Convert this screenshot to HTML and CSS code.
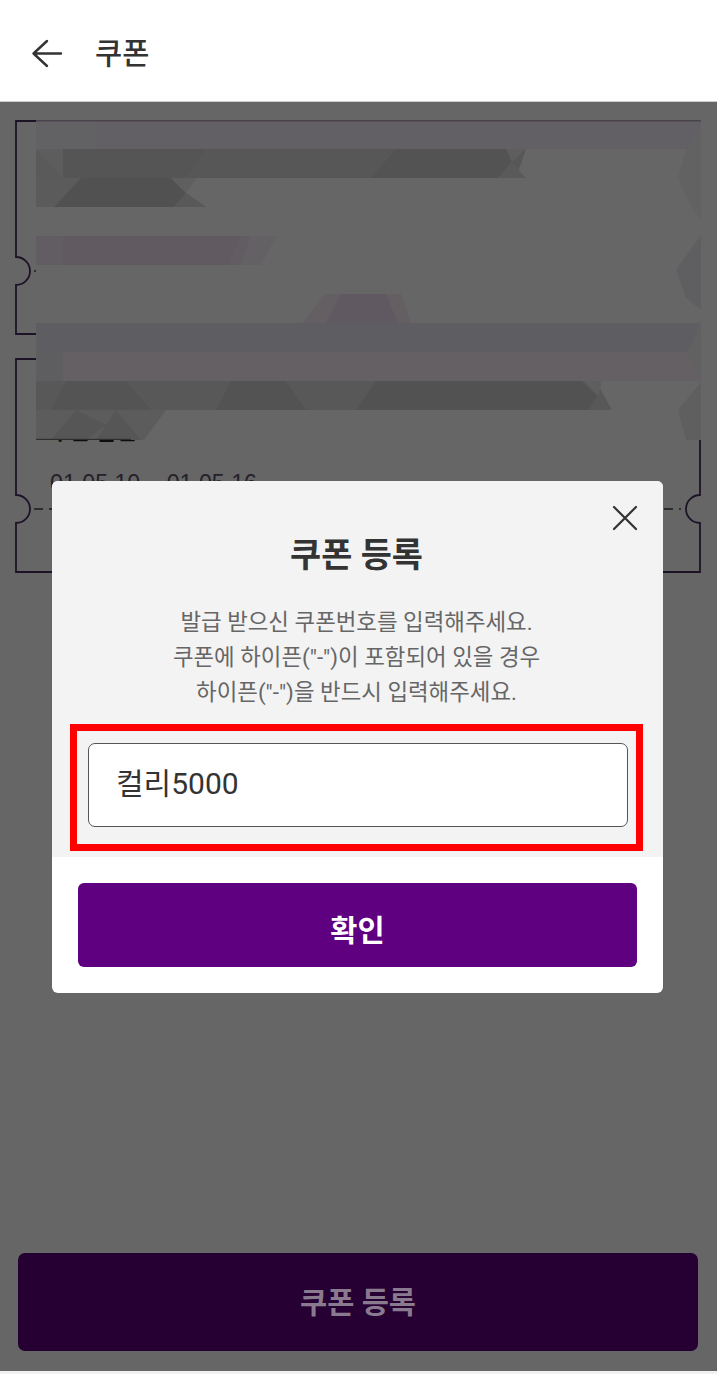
FILE: index.html
```html
<!DOCTYPE html>
<html lang="ko">
<head>
<meta charset="utf-8">
<title>쿠폰</title>
<link rel="stylesheet" href="styles.css">
</head>
<body>
<div class="page">
  <header class="topbar">
    <svg class="back" viewBox="0 0 32 30" width="32" height="30"><path d="M30 14.500H3M16 2 2.500 14.500 16 27" fill="none" stroke="#333" stroke-width="2.400" stroke-linecap="round" stroke-linejoin="round"/></svg>
    <h1 class="topbar-title">쿠폰</h1>
  </header>
  <main class="main">
    <div class="tickets">
      <article class="ticket">
        <svg class="ticket-shape" viewBox="0 0 686 215" width="686" height="215"><use href="#ticket-outline"/></svg>
        <div class="ticket-name">쿠폰 할인</div>
        <div class="ticket-date">01.05.10 ~ 01.05.16</div>
      </article>
      <article class="ticket">
        <svg class="ticket-shape" viewBox="0 0 686 215" width="686" height="215">
          <defs>
            <g id="ticket-outline">
              <path d="M1 1H685V137A14 14 0 0 0 685 165V214H1V165A14 14 0 0 0 1 137Z" fill="none" stroke="#4a3060" stroke-width="1.800"/>
              <path d="M19 151H666" fill="none" stroke="#444" stroke-width="1.600" stroke-dasharray="9 6"/>
            </g>
          </defs>
          <use href="#ticket-outline"/>
        </svg>
        <div class="ticket-name">쿠폰 할인</div>
        <div class="ticket-date">01.05.10 ~ 01.05.16</div>
      </article>
    </div>

    <svg class="mosaic" viewBox="0 0 665 320" width="665" height="320" aria-hidden="true">
      <rect width="665" height="320" fill="#fefefe"/>
      <rect width="665" height="29" fill="#f4f1fa"/>
      <rect width="60" height="29" fill="#f6f3f8"/>
      <rect width="665" height="1.500" fill="#b8a8bb"/>

      <polygon points="0,29 490,29 480,58 0,58" fill="#dadada"/>
      <polygon points="0,29 27,29 27,58 0,58" fill="#e9e9e9"/>
      <polygon points="0,29 27,58 0,58" fill="#e0e0e0"/>
      <polygon points="27,29 170,29 150,58 27,58" fill="#d5d5d5"/>
      <polygon points="360,29 470,29 476,42 462,58 335,58" fill="#cfcfcf"/>
      <polygon points="470,29 490,29 476,42" fill="#eaeaea"/>
      <polygon points="476,42 490,58 462,58" fill="#e2e2e2"/>

      <polygon points="0,58 160,58 150,73 170,87 0,87" fill="#e4e4e4"/>
      <polygon points="18,87 45,58 135,58 150,73 138,87" fill="#cbcbcb"/>
      <polygon points="150,73 170,87 138,87" fill="#dedede"/>
      <polygon points="135,58 160,58 150,73" fill="#eeeeee"/>

      <polygon points="0,116 240,116 225,145 0,145" fill="#f5e8f6"/>
      <polygon points="27,116 205,116 192,145 27,145" fill="#f3e2f1"/>
      <polygon points="240,116 225,145 205,145 215,116" fill="#fbf3fb"/>

      <polygon points="290,174 365,174 375,203 266,203" fill="#f8eef8"/>
      <polygon points="305,174 350,174 362,203 290,203" fill="#f0dff2"/>

      <rect y="203" width="665" height="29" fill="#ecebf4"/>
      <rect y="232" width="665" height="29" fill="#fcf0f8"/>
      <rect y="232" width="27" height="29" fill="#ececf2"/>

      <polygon points="0,261 560,261 576,290 0,290" fill="#dcdcdc"/>
      <polygon points="30,261 90,261 115,290 15,290" fill="#d2d2d2"/>
      <polygon points="195,261 250,261 270,290 180,290" fill="#d0d0d0"/>
      <polygon points="340,261 545,261 562,276 552,290 320,290" fill="#cecece"/>
      <polygon points="548,261 566,261 562,276" fill="#ececec"/>

      <polygon points="0,290 130,290 108,320 0,320" fill="#e6e6e6"/>
      <polygon points="15,320 40,290 70,305 50,320" fill="#d6d6d6"/>
      <polygon points="60,320 80,290 105,320" fill="#d6d6d6"/>

      <rect y="318.800" width="95" height="1.200" fill="#777"/>

      <polygon points="665,9 650,30 642,58 655,87 665,100" fill="#f4f4f7"/>
      <polygon points="665,115 640,150 650,178 665,190" fill="#eeeef3"/>
      <polygon points="665,200 652,232 665,262" fill="#f2f2f5"/>
      <polygon points="665,262 642,290 650,320 665,320" fill="#eeeef1"/>
    </svg>

    <button class="submit" type="button"><span class="submit-label">쿠폰 등록</span></button>

    <div class="overlay">
      <section class="modal">
        <div class="modal-top">
          <svg class="close" viewBox="0 0 26 26" width="26" height="26"><path d="M2 2 24 24M24 2 2 24" fill="none" stroke="#333" stroke-width="2.200" stroke-linecap="round"/></svg>
          <h2 class="modal-title">쿠폰 등록</h2>
          <p class="modal-desc">발급 받으신 쿠폰번호를 입력해주세요.<br>쿠폰에 하이픈("-")이 포함되어 있을 경우<br>하이픈("-")을 반드시 입력해주세요.</p>
          <div class="highlight">
            <div class="field">컬리5000</div>
          </div>
        </div>
        <div class="modal-bottom">
          <button class="confirm" type="button">확인</button>
        </div>
      </section>
    </div>
  </main>
  <div class="endstrip"></div>
</div>
</body>
</html>
```

FILE: styles.css
```css
* { box-sizing: border-box; }
html, body { margin: 0; padding: 0; }
body {
  background: #fff;
  font-family: Roboto, "Noto Sans CJK KR", "Liberation Sans", sans-serif;
  color: #333;
}
button { font-family: inherit; border: 0; padding: 0; }
.page {
  width: 717px;
  height: 1374px;
  display: flex;
  flex-direction: column;
  overflow: hidden;
}
.topbar {
  height: 102px;
  flex: none;
  display: flex;
  align-items: center;
  padding: 6px 0 0 31px;
  gap: 32px;
  background: #fff;
  border-bottom: 1px solid #ccc;
}
.back { flex: none; display: block; }
.topbar-title {
  margin: 0;
  font-size: 29.500px;
  font-weight: 500;
  line-height: 40px;
  color: #333;
}
.main {
  position: relative;
  flex: 1;
  min-height: 0;
  display: flex;
  flex-direction: column;
  background: #fff;
}
.tickets {
  display: flex;
  flex-direction: column;
  gap: 23px;
  padding: 18px 16px 0 15px;
}
.ticket {
  position: relative;
  height: 215px;
  padding: 56px 0 0 35px;
}
.ticket-shape { position: absolute; left: 0; top: 0; display: block; overflow: visible; }
.ticket-name {
  font-size: 22px;
  font-weight: 700;
  line-height: 36px;
  color: #222;
}
.ticket-date {
  margin-top: 19px;
  font-family: "Liberation Sans", sans-serif;
  font-size: 23.200px;
  line-height: 28px;
  color: #605068;
}
.mosaic {
  position: absolute;
  left: 36px;
  top: 18px;
  display: block;
  filter: blur(0.6px);
}
.submit {
  margin: auto 19px 20px 18px;
  height: 98px;
  flex: none;
  padding-bottom: 4px;
  background: #5f0080;
  border-radius: 7px;
  font-size: 29.500px;
  font-weight: 700;
}
.submit-label {
  position: relative;
  z-index: 2;
  color: #8a7a90;
}
.overlay {
  position: absolute;
  inset: 0;
  z-index: 1;
  display: flex;
  justify-content: center;
  align-items: flex-start;
  padding: 379px 2px 0 0;
  background: rgba(0, 0, 0, 0.6);
}
.modal {
  width: 611px;
  height: 512px;
  display: flex;
  flex-direction: column;
  background: #fff;
  border-radius: 6px;
  overflow: hidden;
}
.modal-top {
  position: relative;
  height: 376px;
  flex: none;
  background: #f3f3f3;
  padding: 52px 20px 0 18px;
}
.close { position: absolute; right: 25px; top: 24px; display: block; }
.modal-title {
  margin: 0;
  text-align: center;
  font-size: 33.800px;
  font-weight: 700;
  line-height: 46px;
  color: #333;
}
.modal-desc {
  margin: 26px 0 0;
  text-align: center;
  font-size: 22.400px;
  font-weight: 400;
  line-height: 35px;
  color: #666;
}
.highlight {
  width: 573px;
  height: 127px;
  margin-top: 14px;
  border: 7px solid #f00;
  padding: 12px 9px 0 11px;
}
.field {
  width: 540px;
  height: 84px;
  display: flex;
  align-items: center;
  padding: 0 0 8px 27px;
  background: #fff;
  border: 1px solid #555;
  border-radius: 7px;
  font-size: 30px;
  color: #333;
}
.modal-bottom { flex: 1; padding: 26px 26px 26px 26px; }
.confirm {
  display: block;
  width: 559px;
  height: 84px;
  padding-top: 5px;
  background: #5f0080;
  border-radius: 6px;
  color: #fff;
  font-size: 29.500px;
  font-weight: 700;
}
.endstrip { height: 3px; flex: none; background: #f1f1f1; }
```
